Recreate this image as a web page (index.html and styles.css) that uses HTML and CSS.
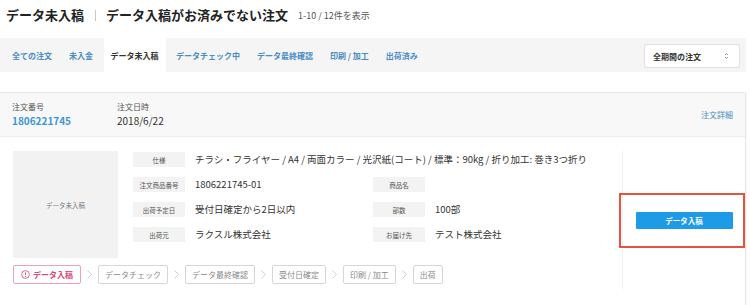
FILE: index.html
```html
<!DOCTYPE html>
<html lang="ja">

<head>
    <meta charset="UTF-8">
    <meta name="viewport" content="width=device-width, initial-scale=1.0">
    <title>データ未入稿</title>
    <link rel="stylesheet" href="styles.css">
</head>

<body>
    <div class="page">
        <header class="page-head">
            <h1 class="page-title">データ未入稿</h1>
            <span class="title-sep"></span>
            <h2 class="page-sub">データ入稿がお済みでない注文</h2>
            <span class="page-count">1-10 / 12件を表示</span>
        </header>

        <nav class="tabs">
            <ul class="tab-list">
                <li class="tab">全ての注文</li>
                <li class="tab">未入金</li>
                <li class="tab tab-active">データ未入稿</li>
                <li class="tab">データチェック中</li>
                <li class="tab">データ最終確認</li>
                <li class="tab">印刷 / 加工</li>
                <li class="tab">出荷済み</li>
            </ul>
            <div class="period-select">
                <span>全期間の注文</span>
                <svg class="select-arrows" width="5" height="8" viewBox="0 0 5 8">
                    <path d="M1 3 L2.5 1.5 L4 3 M1 5 L2.5 6.5 L4 5" fill="none" stroke="#888" stroke-width="0.8" />
                </svg>
            </div>
        </nav>

        <div class="order-card">
            <div class="order-head">
                <div class="head-item">
                    <div class="head-label">注文番号</div>
                    <div class="order-no">1806221745</div>
                </div>
                <div class="head-item">
                    <div class="head-label">注文日時</div>
                    <div class="head-value">2018/6/22</div>
                </div>
                <span class="order-detail">注文詳細</span>
            </div>

            <div class="order-body">
                <div class="order-main">
                    <div class="item-row">
                        <div class="thumb">データ未入稿</div>
                        <div class="specs">
                            <span class="spec-label">仕様</span>
                            <span class="spec-value spec-wide">チラシ・フライヤー / A4 / 両面カラー / 光沢紙(コート) / 標準：90kg / 折り加工: 巻き3つ折り</span>

                            <span class="spec-label">注文商品番号</span>
                            <span class="spec-value">1806221745-01</span>
                            <span class="spec-label">商品名</span>
                            <span class="spec-value"></span>

                            <span class="spec-label">出荷予定日</span>
                            <span class="spec-value">受付日確定から2日以内</span>
                            <span class="spec-label">部数</span>
                            <span class="spec-value">100部</span>

                            <span class="spec-label">出荷元</span>
                            <span class="spec-value">ラクスル株式会社</span>
                            <span class="spec-label">お届け先</span>
                            <span class="spec-value">テスト株式会社</span>
                        </div>
                    </div>

                    <ol class="steps">
                        <li class="step step-current">
                            <svg width="9" height="9" viewBox="0 0 10 10">
                                <circle cx="5" cy="5" r="4.3" fill="none" stroke="#d8487e" stroke-width="0.9" />
                                <path d="M5 2.6 V5.8" stroke="#d8487e" stroke-width="1" />
                                <circle cx="5" cy="7.3" r="0.6" fill="#d8487e" />
                            </svg>
                            データ入稿
                        </li>
                        <li class="step-arrow"><svg width="5" height="9" viewBox="0 0 5 9"><path d="M0.5 0.5 L4.5 4.5 L0.5 8.5" fill="none" stroke="#c4c4c4" stroke-width="0.8" /></svg></li>
                        <li class="step">データチェック</li>
                        <li class="step-arrow"><svg width="5" height="9" viewBox="0 0 5 9"><path d="M0.5 0.5 L4.5 4.5 L0.5 8.5" fill="none" stroke="#c4c4c4" stroke-width="0.8" /></svg></li>
                        <li class="step">データ最終確認</li>
                        <li class="step-arrow"><svg width="5" height="9" viewBox="0 0 5 9"><path d="M0.5 0.5 L4.5 4.5 L0.5 8.5" fill="none" stroke="#c4c4c4" stroke-width="0.8" /></svg></li>
                        <li class="step">受付日確定</li>
                        <li class="step-arrow"><svg width="5" height="9" viewBox="0 0 5 9"><path d="M0.5 0.5 L4.5 4.5 L0.5 8.5" fill="none" stroke="#c4c4c4" stroke-width="0.8" /></svg></li>
                        <li class="step">印刷 / 加工</li>
                        <li class="step-arrow"><svg width="5" height="9" viewBox="0 0 5 9"><path d="M0.5 0.5 L4.5 4.5 L0.5 8.5" fill="none" stroke="#c4c4c4" stroke-width="0.8" /></svg></li>
                        <li class="step">出荷</li>
                    </ol>
                </div>

                <div class="order-action">
                    <div class="highlight">
                        <button class="upload-btn">データ入稿</button>
                    </div>
                </div>
            </div>
        </div>
    </div>
</body>

</html>
```

FILE: styles.css
```css
body {
    margin: 0;
    background: #ffffff;
    font-family: "Noto Sans CJK JP", "Noto Sans", sans-serif;
    color: #333333;
}

.page {
    width: 746px;
}

/* title */
.page-head {
    display: flex;
    align-items: center;
    height: 30px;
    padding: 0 0 8px 6px;
}

.page-title,
.page-sub {
    margin: 0;
    font-size: 13px;
    line-height: 18px;
    font-weight: 700;
    color: #222222;
}

.title-sep {
    width: 1px;
    height: 11px;
    margin: 0 10px 0 11px;
    background: #c8c8c8;
}

.page-count {
    margin-left: 10px;
    font-size: 9px;
    color: #555555;
}

/* tabs */
.tabs {
    display: flex;
    align-items: stretch;
    justify-content: space-between;
    height: 34px;
    background: #f5f5f5;
}

.tab-list {
    display: flex;
    margin: 0;
    padding: 0 0 0 3.5px;
    list-style: none;
}

.tab {
    display: flex;
    align-items: center;
    padding: 0 8.5px;
    font-size: 8px;
    font-weight: 700;
    color: #4a8cc4;
}

.tab-active {
    background: #ffffff;
    color: #333333;
    padding: 0 7px;
    margin: 0 2px;
}

.period-select {
    display: flex;
    align-items: center;
    justify-content: space-between;
    box-sizing: border-box;
    width: 96px;
    height: 24px;
    margin: 6px 6px 0 0;
    padding: 0 10px 0 8px;
    background: #ffffff;
    border: 1px solid #e2e2e2;
    border-radius: 2px;
    font-size: 8px;
    font-weight: 700;
    color: #333333;
}

/* order card */
.order-card {
    margin-top: 20px;
    border: 1px solid #e6e6e6;
    border-left: none;
    border-radius: 0 2px 2px 0;
    box-shadow: 0 1px 2px rgba(0, 0, 0, 0.08);
}

.order-head {
    display: flex;
    align-items: center;
    height: 43px;
    padding: 0 12px;
    background: #f8f8f8;
    border-bottom: 1px solid #ececec;
}

.head-item {
    width: 105px;
}

.head-label {
    font-size: 8px;
    line-height: 12px;
    color: #555555;
}

.order-no {
    font-size: 10px;
    line-height: 16px;
    font-weight: 700;
    color: #3a96d6;
}

.head-value {
    font-size: 10px;
    line-height: 16px;
    color: #333333;
}

.order-detail {
    margin-left: auto;
    font-size: 8px;
    color: #4a8cc4;
}

.order-body {
    display: flex;
    padding: 14px 0 16px;
}

.order-main {
    flex: 1;
    padding: 0 0 5px 13px;
}

.item-row {
    display: flex;
    gap: 15px;
}

.thumb {
    display: flex;
    align-items: center;
    justify-content: center;
    width: 105px;
    height: 107px;
    background: #f2f2f2;
    font-size: 6.5px;
    color: #777777;
}

.specs {
    display: grid;
    grid-template-columns: 52px 168px 52px 1fr;
    grid-auto-rows: 15px;
    column-gap: 10px;
    row-gap: 10px;
    align-content: start;
    padding-top: 1px;
}

.spec-label {
    display: flex;
    align-items: center;
    justify-content: center;
    background: #f3f3f3;
    font-size: 6.5px;
    color: #555555;
}

.spec-value {
    font-size: 9.5px;
    line-height: 15px;
    color: #333333;
    white-space: nowrap;
}

.spec-wide {
    grid-column: 2 / 5;
}

/* progress steps */
.steps {
    display: flex;
    align-items: center;
    margin: 7px 0 0;
    padding: 0;
    list-style: none;
}

.step {
    display: flex;
    align-items: center;
    gap: 3px;
    height: 17px;
    padding: 0 6px;
    border: 1px solid #d6d6d6;
    border-radius: 2px;
    font-size: 8px;
    color: #8a8a8a;
}

.step-current {
    padding: 0 7px;
    border-color: #eaa3bd;
    color: #d8487e;
    font-weight: 700;
}

.step-arrow {
    display: flex;
    justify-content: center;
    width: 17px;
}

/* action column */
.order-action {
    display: flex;
    align-items: center;
    width: 122px;
    border-left: 1px solid #f0f0f0;
}

.highlight {
    display: flex;
    align-items: center;
    justify-content: center;
    box-sizing: border-box;
    width: calc(100% + 4px);
    height: 55px;
    margin-left: -4px;
    padding-left: 4px;
    border: 2px solid #e4553f;
}

.upload-btn {
    width: 97px;
    height: 17px;
    padding: 0;
    border: none;
    border-radius: 1px;
    background: #1e9be6;
    color: #ffffff;
    font-family: inherit;
    font-size: 7.5px;
    font-weight: 700;
}
```
